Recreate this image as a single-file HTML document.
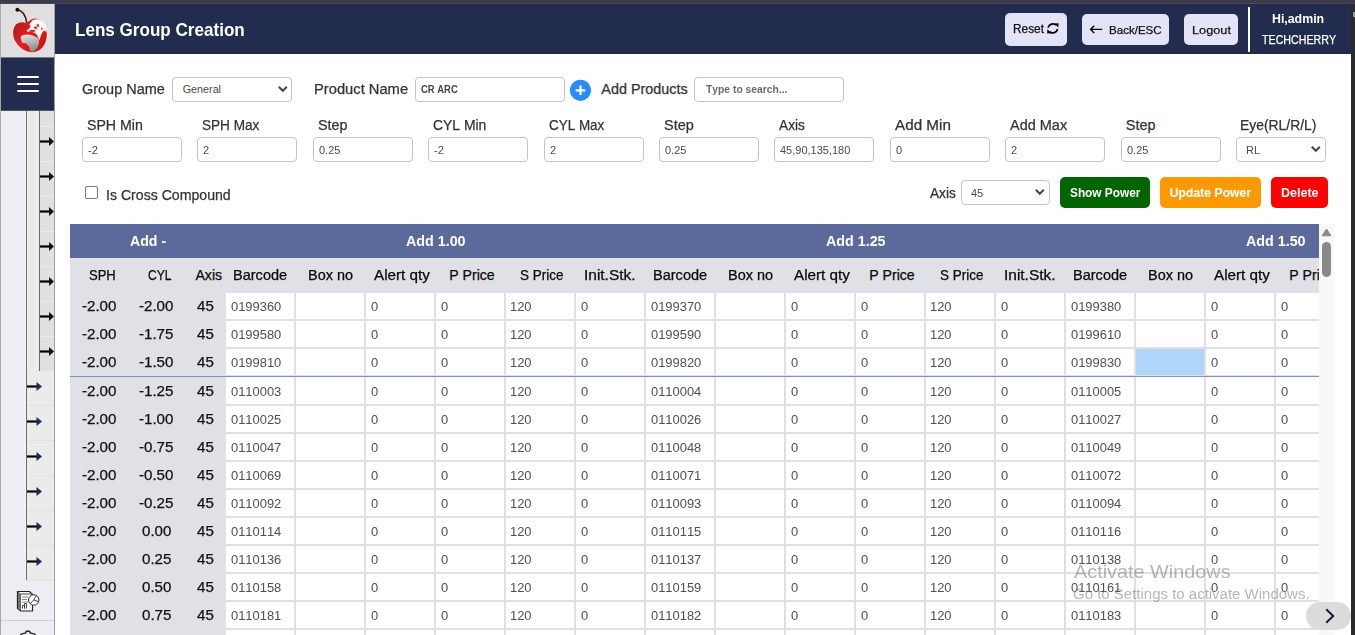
<!DOCTYPE html>
<html><head><meta charset="utf-8"><title>Lens Group Creation</title>
<style>
html,body{margin:0;padding:0;width:1355px;height:635px;overflow:hidden;background:#fff}
body{position:relative;font-family:"Liberation Sans",sans-serif}
.t{position:absolute;line-height:0;white-space:nowrap;transform-origin:0 0;font-kerning:none}
.r{-webkit-text-stroke:0.25px currentColor}
</style></head><body>
<div style="position:absolute;left:0px;top:0px;width:1355px;height:4px;background:#3d3a4f"></div>
<div style="position:absolute;left:0px;top:3px;width:1355px;height:1px;background:#4a4850"></div>
<div style="position:absolute;left:1351px;top:4px;width:4px;height:631px;background:#2b2b2b"></div>
<div style="position:absolute;left:1353px;top:12px;width:2px;height:5px;background:#9a9a9a"></div>
<div style="position:absolute;left:0px;top:4px;width:1px;height:631px;background:#a8a8a8"></div>
<div style="position:absolute;left:1px;top:4px;width:53px;height:53px;background:#dfdfdf"></div>
<div style="position:absolute;left:1px;top:57px;width:53px;height:1px;background:#7a7a7a"></div>
<div style="position:absolute;left:1px;top:58px;width:53px;height:52px;background:#212c4f"></div>
<div style="position:absolute;left:17px;top:76px;width:22px;height:2px;background:#fff;border-radius:1px"></div>
<div style="position:absolute;left:17px;top:83px;width:22px;height:2px;background:#fff;border-radius:1px"></div>
<div style="position:absolute;left:17px;top:90px;width:22px;height:2px;background:#fff;border-radius:1px"></div>
<div style="position:absolute;left:1px;top:110px;width:53px;height:1px;background:#555"></div>
<div style="position:absolute;left:1px;top:111px;width:25px;height:524px;background:#edeef3"></div>
<div style="position:absolute;left:25px;top:111px;width:1px;height:469px;background:#f7f8fc"></div>
<div style="position:absolute;left:26px;top:111px;width:1px;height:469px;background:#6b6b6b"></div>
<div style="position:absolute;left:27px;top:111px;width:12px;height:469px;background:#ebebeb"></div>
<div style="position:absolute;left:27px;top:111px;width:1px;height:469px;background:#f3f3f3"></div>
<div style="position:absolute;left:39px;top:111px;width:1px;height:260px;background:#6b6b6b"></div>
<div style="position:absolute;left:40px;top:111px;width:14px;height:260px;background:#e0e0e0"></div>
<div style="position:absolute;left:27px;top:371px;width:27px;height:209px;background:#ebebeb"></div>
<div style="position:absolute;left:26px;top:580px;width:28px;height:55px;background:#edeef3"></div>
<div style="position:absolute;left:25px;top:580px;width:1px;height:55px;background:#edeef3"></div>
<div style="position:absolute;left:54px;top:4px;width:1px;height:631px;background:#a0a0a0"></div>
<div style="position:absolute;left:40px;top:126px;width:14px;height:1px;background:#eaeaea"></div>
<div style="position:absolute;left:40px;top:161px;width:14px;height:1px;background:#eaeaea"></div>
<div style="position:absolute;left:40px;top:196px;width:14px;height:1px;background:#eaeaea"></div>
<div style="position:absolute;left:40px;top:231px;width:14px;height:1px;background:#eaeaea"></div>
<div style="position:absolute;left:40px;top:266px;width:14px;height:1px;background:#eaeaea"></div>
<div style="position:absolute;left:40px;top:301px;width:14px;height:1px;background:#eaeaea"></div>
<div style="position:absolute;left:40px;top:336px;width:14px;height:1px;background:#eaeaea"></div>
<div style="position:absolute;left:27px;top:405px;width:27px;height:1px;background:#e2e2e2"></div>
<div style="position:absolute;left:27px;top:440px;width:27px;height:1px;background:#e2e2e2"></div>
<div style="position:absolute;left:27px;top:475px;width:27px;height:1px;background:#e2e2e2"></div>
<div style="position:absolute;left:27px;top:510px;width:27px;height:1px;background:#e2e2e2"></div>
<div style="position:absolute;left:27px;top:545px;width:27px;height:1px;background:#e2e2e2"></div>
<div style="position:absolute;left:27px;top:580px;width:27px;height:1px;background:#e2e2e2"></div>
<div style="position:absolute;left:1px;top:620px;width:53px;height:1px;background:#d0d0d0"></div>
<svg style="position:absolute;left:0;top:0" width="60" height="635"><path d="M40 141.5h10" stroke="#000" stroke-width="2.2"/><path d="M49 137.0l5 4.5l-5 4.5z" fill="#111"/><path d="M40 176.5h10" stroke="#000" stroke-width="2.2"/><path d="M49 172.0l5 4.5l-5 4.5z" fill="#111"/><path d="M40 211.5h10" stroke="#000" stroke-width="2.2"/><path d="M49 207.0l5 4.5l-5 4.5z" fill="#111"/><path d="M40 246.5h10" stroke="#000" stroke-width="2.2"/><path d="M49 242.0l5 4.5l-5 4.5z" fill="#111"/><path d="M40 281.5h10" stroke="#000" stroke-width="2.2"/><path d="M49 277.0l5 4.5l-5 4.5z" fill="#111"/><path d="M40 316.5h10" stroke="#000" stroke-width="2.2"/><path d="M49 312.0l5 4.5l-5 4.5z" fill="#111"/><path d="M40 351.5h10" stroke="#000" stroke-width="2.2"/><path d="M49 347.0l5 4.5l-5 4.5z" fill="#111"/><path d="M27 386.5h10" stroke="#000" stroke-width="2.2"/><path d="M36.5 382.0l5.5 4.5l-5.5 4.5z" fill="#1c2a55"/><path d="M27 421.5h10" stroke="#000" stroke-width="2.2"/><path d="M36.5 417.0l5.5 4.5l-5.5 4.5z" fill="#1c2a55"/><path d="M27 456.5h10" stroke="#000" stroke-width="2.2"/><path d="M36.5 452.0l5.5 4.5l-5.5 4.5z" fill="#1c2a55"/><path d="M27 491.5h10" stroke="#000" stroke-width="2.2"/><path d="M36.5 487.0l5.5 4.5l-5.5 4.5z" fill="#1c2a55"/><path d="M27 526.5h10" stroke="#000" stroke-width="2.2"/><path d="M36.5 522.0l5.5 4.5l-5.5 4.5z" fill="#1c2a55"/><path d="M27 561.5h10" stroke="#000" stroke-width="2.2"/><path d="M36.5 557.0l5.5 4.5l-5.5 4.5z" fill="#1c2a55"/><g><path d="M17.5 591.5h12l3 3v16.5h-12l-3-2.5z" fill="#fff" stroke="#222" stroke-width="1.2"/><path d="M17.5 591.5l3 2.5v17M20.5 594h12" fill="none" stroke="#444" stroke-width="1"/><path d="M18 592l2.5 2v16.5l-2.5-2.5z" fill="#777"/><path d="M22 597h6M22 599.5h5M22 602h6" stroke="#888" stroke-width="1"/><path d="M22.5 608.5v-3h2v3M24.5 608.5v-5h2v5" fill="none" stroke="#333" stroke-width="0.9"/><circle cx="33.7" cy="600" r="5.2" fill="#fff" stroke="#333" stroke-width="1"/><path d="M33.7 600l2.5-4.3M33.7 600l4.6 1.5M33.7 600l-3.5 3.8" stroke="#333" stroke-width="0.9"/></g><path d="M20.5 636 Q20.5 633.5 22.8 633.6 L25.6 632.8 L26.3 631.3 H29.5 L30.2 632.8 L33 633.6 Q35.5 633.5 35.5 636" fill="none" stroke="#222" stroke-width="1.4"/></svg>
<svg style="position:absolute;left:0;top:4px" width="55" height="53" viewBox="0 4 55 53">
<defs>
<linearGradient id="rg" x1="0" y1="0.2" x2="1" y2="0.8"><stop offset="0" stop-color="#a81e1e"/><stop offset="0.45" stop-color="#ec1a1a"/><stop offset="1" stop-color="#c81414"/></linearGradient>
<linearGradient id="gg" x1="0" y1="0" x2="0.3" y2="1"><stop offset="0" stop-color="#e6e8e8"/><stop offset="1" stop-color="#8a9090"/></linearGradient>
<linearGradient id="wg" x1="0" y1="0" x2="1" y2="1"><stop offset="0" stop-color="#ffffff"/><stop offset="1" stop-color="#e6eeee"/></linearGradient>
<filter id="bl" x="-10%" y="-10%" width="120%" height="120%"><feGaussianBlur stdDeviation="0.45"/></filter>
</defs>
<g filter="url(#bl)">
<path d="M26.7 23.2 C23 21.5 17 21.8 14.5 26.5 C12.4 30.5 12.6 38 16.3 42.5 C19 47 24 50.8 30 52 C36 53 41 49.8 44 45.2 C47.2 40 47.4 33 45.6 27.8 C43.6 22 39.2 18.2 35 18.5 C31 18.8 28.5 21.5 26.7 23.2 Z" fill="url(#rg)"/>
<path d="M32.5 20.2 C36 18.4 41.5 19 44.6 23.2 C46.4 26 46.8 29.5 46.4 32 L44.2 30.6 L42.2 32.4 L40.6 36.6 L39.4 40.6 L37.6 36 L35.4 33.2 L31.6 31.8 L27.2 31.6 L26.4 30.4 L29.4 28.6 L30.6 26.4 L29.4 24.2 Z" fill="url(#wg)"/>
<path d="M33.6 27.6 l2.4 -1.6 l1.4 2.2 l-2 1.4z M36.4 24.6 l1.8 -0.8 l1.2 2.6 l-1.6 0.8z M28.8 30.6 l3.6 -0.8 l3.4 0.8 l-1.6 1.4 l-3.6 0.1z M41 27.5 l2 1 l-1.4 2z" fill="#ea2020"/>
<path d="M20.6 36.8 C22.5 34.4 27 34 31.6 35 L35.6 36.8 L38.6 38.2 L39.2 43 L37.2 48 L33.6 51.4 L30.4 51.6 L29 46.5 L26 43.6 L21.8 42.8 Z" fill="url(#gg)"/>
</g>
<path d="M17.5 9.8 C22 10.6 25.6 14.6 26.8 22.8" fill="none" stroke="#3a1a12" stroke-width="1.6"/>
<circle cx="17.4" cy="9.8" r="2" fill="#2a0808"/>
</svg>
<div style="position:absolute;left:55px;top:4px;width:1296px;height:50px;background:#212c4f"></div>
<div class="t" style="left:75.16px;top:30.00px;font-size:17.73px;color:#fff;font-weight:bold;transform:scaleX(0.9634);">Lens Group Creation</div>
<div style="position:absolute;left:1005px;top:13px;width:62px;height:33px;background:#e4e4f8;border-radius:5px"></div>
<div style="position:absolute;left:1082px;top:14px;width:87px;height:31px;background:#e4e4f8;border-radius:5px"></div>
<div style="position:absolute;left:1184px;top:14px;width:54px;height:31px;background:#e4e4f8;border-radius:5px"></div>
<div class="t r" style="left:1012.83px;top:29.00px;font-size:12.06px;color:#111;transform:scaleX(0.9824);">Reset</div>
<div class="t r" style="left:1108.75px;top:30.00px;font-size:11.77px;color:#111;transform:scaleX(0.9820);">Back/ESC</div>
<div class="t r" style="left:1191.76px;top:30.00px;font-size:11.77px;color:#111;transform:scaleX(1.0813);">Logout</div>
<svg style="position:absolute;left:1040px;top:18px" width="30" height="22" viewBox="1040 18 30 22"><path d="M1048.1 27.6 A4.9 4.9 0 0 1 1056.2 25.2" fill="none" stroke="#000" stroke-width="1.7"/><path d="M1054.2 23.6 L1058.6 23.2 L1058.4 27.6 Z" fill="#000"/><path d="M1057.6 29 A4.9 4.9 0 0 1 1049.5 31.6" fill="none" stroke="#000" stroke-width="1.7"/><path d="M1051.6 33.2 L1047.2 33.6 L1047.3 29.2 Z" fill="#000"/></svg>
<svg style="position:absolute;left:1085px;top:20px" width="25" height="20" viewBox="1085 20 25 20"><path d="M1090.5 29.4 h11.7 M1094.2 25.8 l-3.6 3.6 l3.6 3.6" fill="none" stroke="#000" stroke-width="1.4"/></svg>
<div style="position:absolute;left:1248px;top:7px;width:2px;height:45px;background:#fff"></div>
<div class="t" style="left:1272.27px;top:19.00px;font-size:12.50px;color:#fff;font-weight:bold;transform:scaleX(0.9869);">Hi,admin</div>
<div class="t r" style="left:1261.56px;top:40.00px;font-size:12.21px;color:#fff;transform:scaleX(0.8748);">TECHCHERRY</div>
<div class="t r" style="left:82.37px;top:89.00px;font-size:14.39px;color:#333;transform:scaleX(1.0060);">Group Name</div>
<div style="position:absolute;left:172px;top:77px;width:118px;height:23px;background:#fff;border:1px solid #c4c4c4;border-radius:4px"></div>
<div class="t" style="left:182.76px;top:89.00px;font-size:10.76px;color:#4a4a4a;">General</div>
<svg style="position:absolute;left:278px;top:85px" width="12" height="8" viewBox="0 0 12 8"><path d="M0.8 1.8 L4.8 5.8 L8.8 1.8" fill="none" stroke="#474747" stroke-width="2"/></svg>
<div class="t r" style="left:314.29px;top:89.00px;font-size:14.39px;color:#333;transform:scaleX(1.0238);">Product Name</div>
<div style="position:absolute;left:415px;top:77px;width:148px;height:23px;background:#fff;border:1px solid #c4c4c4;border-radius:4px"></div>
<div class="t" style="left:421.31px;top:89.00px;font-size:11.05px;color:#444;font-weight:bold;transform:scaleX(0.8554);">CR ARC</div>
<svg style="position:absolute;left:569px;top:79px" width="23" height="23" viewBox="0 0 23 23"><circle cx="11.5" cy="11.3" r="10.6" fill="#2a8bfb"/><path d="M11.5 6.5v9.6M6.7 11.3h9.6" stroke="#fff" stroke-width="2.2"/></svg>
<div class="t r" style="left:601.37px;top:89.00px;font-size:14.39px;color:#333;">Add Products</div>
<div style="position:absolute;left:694px;top:77px;width:148px;height:23px;background:#fff;border:1px solid #c4c4c4;border-radius:4px"></div>
<div class="t" style="left:706.38px;top:89.00px;font-size:10.76px;color:#6a6a6a;font-weight:bold;transform:scaleX(0.9605);">Type to search...</div>
<div class="t r" style="left:86.86px;top:125.00px;font-size:14.39px;color:#333;transform:scaleX(0.9840);">SPH Min</div>
<div style="position:absolute;left:82px;top:137px;width:98px;height:23px;background:#fff;border:1px solid #c4c4c4;border-radius:4px"></div>
<div class="t r" style="left:201.88px;top:125.00px;font-size:14.39px;color:#333;transform:scaleX(0.9439);">SPH Max</div>
<div style="position:absolute;left:197px;top:137px;width:98px;height:23px;background:#fff;border:1px solid #c4c4c4;border-radius:4px"></div>
<div class="t r" style="left:317.85px;top:125.00px;font-size:14.39px;color:#333;transform:scaleX(0.9949);">Step</div>
<div style="position:absolute;left:313px;top:137px;width:98px;height:23px;background:#fff;border:1px solid #c4c4c4;border-radius:4px"></div>
<div class="t r" style="left:432.79px;top:125.00px;font-size:14.39px;color:#333;transform:scaleX(0.9680);">CYL Min</div>
<div style="position:absolute;left:428px;top:137px;width:98px;height:23px;background:#fff;border:1px solid #c4c4c4;border-radius:4px"></div>
<div class="t r" style="left:548.82px;top:125.00px;font-size:14.39px;color:#333;transform:scaleX(0.9350);">CYL Max</div>
<div style="position:absolute;left:544px;top:137px;width:98px;height:23px;background:#fff;border:1px solid #c4c4c4;border-radius:4px"></div>
<div class="t r" style="left:663.84px;top:125.00px;font-size:14.39px;color:#333;transform:scaleX(1.0055);">Step</div>
<div style="position:absolute;left:659px;top:137px;width:98px;height:23px;background:#fff;border:1px solid #c4c4c4;border-radius:4px"></div>
<div class="t r" style="left:779.47px;top:125.00px;font-size:14.39px;color:#333;transform:scaleX(0.9536);">Axis</div>
<div style="position:absolute;left:774px;top:137px;width:98px;height:23px;background:#fff;border:1px solid #c4c4c4;border-radius:4px"></div>
<div class="t r" style="left:895.47px;top:125.00px;font-size:14.39px;color:#333;transform:scaleX(1.0593);">Add Min</div>
<div style="position:absolute;left:890px;top:137px;width:98px;height:23px;background:#fff;border:1px solid #c4c4c4;border-radius:4px"></div>
<div class="t r" style="left:1010.47px;top:125.00px;font-size:14.39px;color:#333;transform:scaleX(1.0070);">Add Max</div>
<div style="position:absolute;left:1005px;top:137px;width:98px;height:23px;background:#fff;border:1px solid #c4c4c4;border-radius:4px"></div>
<div class="t r" style="left:1125.85px;top:125.00px;font-size:14.39px;color:#333;">Step</div>
<div style="position:absolute;left:1121px;top:137px;width:98px;height:23px;background:#fff;border:1px solid #c4c4c4;border-radius:4px"></div>
<div class="t r" style="left:1240.36px;top:125.00px;font-size:14.39px;color:#333;transform:scaleX(0.9664);">Eye(RL/R/L)</div>
<div style="position:absolute;left:1236px;top:137px;width:88px;height:23px;background:#fff;border:1px solid #c4c4c4;border-radius:4px"></div>
<div class="t" style="left:780.45px;top:151.00px;font-size:10.17px;color:#4a4a4a;transform:scaleX(1.0833);">45,90,135,180</div>
<div class="t" style="left:88.31px;top:151.00px;font-size:10.17px;color:#4a4a4a;transform:scaleX(1.0833);">-2</div>
<div class="t" style="left:202.95px;top:151.00px;font-size:10.17px;color:#4a4a4a;transform:scaleX(1.0833);">2</div>
<div class="t" style="left:319.07px;top:151.00px;font-size:10.17px;color:#4a4a4a;transform:scaleX(1.0833);">0.25</div>
<div class="t" style="left:434.31px;top:151.00px;font-size:10.17px;color:#4a4a4a;transform:scaleX(1.0833);">-2</div>
<div class="t" style="left:549.95px;top:151.00px;font-size:10.17px;color:#4a4a4a;transform:scaleX(1.0833);">2</div>
<div class="t" style="left:665.07px;top:151.00px;font-size:10.17px;color:#4a4a4a;transform:scaleX(1.0833);">0.25</div>
<div class="t" style="left:896.07px;top:151.00px;font-size:10.17px;color:#4a4a4a;transform:scaleX(1.0833);">0</div>
<div class="t" style="left:1010.95px;top:151.00px;font-size:10.17px;color:#4a4a4a;transform:scaleX(1.0833);">2</div>
<div class="t" style="left:1127.07px;top:151.00px;font-size:10.17px;color:#4a4a4a;transform:scaleX(1.0833);">0.25</div>
<div class="t" style="left:1245.60px;top:151.00px;font-size:10.17px;color:#4a4a4a;transform:scaleX(1.0833);">RL</div>
<svg style="position:absolute;left:1311px;top:145px" width="12" height="8" viewBox="0 0 12 8"><path d="M0.8 1.8 L4.8 5.8 L8.8 1.8" fill="none" stroke="#474747" stroke-width="2"/></svg>
<div style="position:absolute;left:85px;top:186px;width:11px;height:11px;border:1px solid #777;border-radius:2px;background:#fff"></div>
<div class="t r" style="left:105.50px;top:195.00px;font-size:14.39px;color:#333;transform:scaleX(0.9816);">Is Cross Compound</div>
<div class="t r" style="left:930.17px;top:193.00px;font-size:14.39px;color:#333;transform:scaleX(0.9498);">Axis</div>
<div style="position:absolute;left:961px;top:180px;width:87px;height:23px;background:#fff;border:1px solid #c4c4c4;border-radius:4px"></div>
<div class="t" style="left:971.05px;top:194.00px;font-size:10.17px;color:#4a4a4a;transform:scaleX(1.0833);">45</div>
<svg style="position:absolute;left:1035px;top:188px" width="12" height="8" viewBox="0 0 12 8"><path d="M0.8 1.8 L4.8 5.8 L8.8 1.8" fill="none" stroke="#474747" stroke-width="2"/></svg>
<div style="position:absolute;left:1060px;top:177px;width:90px;height:31px;background:#006400;border-radius:5px"></div>
<div style="position:absolute;left:1160px;top:177px;width:101px;height:31px;background:#ff9900;border-radius:5px"></div>
<div style="position:absolute;left:1271px;top:177px;width:57px;height:31px;background:#ff0000;border-radius:5px"></div>
<div class="t" style="left:1069.86px;top:193.00px;font-size:12.79px;color:#fff;font-weight:bold;transform:scaleX(0.9260);">Show Power</div>
<div class="t" style="left:1169.77px;top:193.00px;font-size:12.21px;color:#fff;font-weight:bold;">Update Power</div>
<div class="t" style="left:1280.96px;top:193.00px;font-size:12.21px;color:#fff;font-weight:bold;transform:scaleX(1.0251);">Delete</div>
<div style="position:absolute;left:70px;top:224px;width:1249px;height:34px;background:#5b6a9a"></div>
<div style="position:absolute;left:70px;top:258px;width:1249px;height:35px;background:#dfe1e6"></div>
<div style="position:absolute;left:70px;top:293px;width:156px;height:342px;background:#dfe1e6"></div>
<div style="position:absolute;left:226px;top:293px;width:1093px;height:342px;background:#fff"></div>
<div style="position:absolute;left:294px;top:293px;width:2px;height:342px;background:#e0e0e0"></div>
<div style="position:absolute;left:364px;top:293px;width:2px;height:342px;background:#e0e0e0"></div>
<div style="position:absolute;left:434px;top:293px;width:2px;height:342px;background:#e0e0e0"></div>
<div style="position:absolute;left:504px;top:293px;width:2px;height:342px;background:#e0e0e0"></div>
<div style="position:absolute;left:574px;top:293px;width:2px;height:342px;background:#e0e0e0"></div>
<div style="position:absolute;left:644px;top:293px;width:2px;height:342px;background:#e0e0e0"></div>
<div style="position:absolute;left:714px;top:293px;width:2px;height:342px;background:#e0e0e0"></div>
<div style="position:absolute;left:784px;top:293px;width:2px;height:342px;background:#e0e0e0"></div>
<div style="position:absolute;left:854px;top:293px;width:2px;height:342px;background:#e0e0e0"></div>
<div style="position:absolute;left:924px;top:293px;width:2px;height:342px;background:#e0e0e0"></div>
<div style="position:absolute;left:994px;top:293px;width:2px;height:342px;background:#e0e0e0"></div>
<div style="position:absolute;left:1064px;top:293px;width:2px;height:342px;background:#e0e0e0"></div>
<div style="position:absolute;left:1134px;top:293px;width:2px;height:342px;background:#e0e0e0"></div>
<div style="position:absolute;left:1204px;top:293px;width:2px;height:342px;background:#e0e0e0"></div>
<div style="position:absolute;left:1274px;top:293px;width:2px;height:342px;background:#e0e0e0"></div>
<div style="position:absolute;left:226px;top:319px;width:1093px;height:2px;background:#e0e0e0"></div>
<div style="position:absolute;left:226px;top:347px;width:1093px;height:2px;background:#e0e0e0"></div>
<div style="position:absolute;left:226px;top:375px;width:1093px;height:2px;background:#e0e0e0"></div>
<div style="position:absolute;left:226px;top:404px;width:1093px;height:2px;background:#e0e0e0"></div>
<div style="position:absolute;left:226px;top:432px;width:1093px;height:2px;background:#e0e0e0"></div>
<div style="position:absolute;left:226px;top:460px;width:1093px;height:2px;background:#e0e0e0"></div>
<div style="position:absolute;left:226px;top:488px;width:1093px;height:2px;background:#e0e0e0"></div>
<div style="position:absolute;left:226px;top:516px;width:1093px;height:2px;background:#e0e0e0"></div>
<div style="position:absolute;left:226px;top:544px;width:1093px;height:2px;background:#e0e0e0"></div>
<div style="position:absolute;left:226px;top:572px;width:1093px;height:2px;background:#e0e0e0"></div>
<div style="position:absolute;left:226px;top:600px;width:1093px;height:2px;background:#e0e0e0"></div>
<div style="position:absolute;left:226px;top:628px;width:1093px;height:2px;background:#e0e0e0"></div>
<div style="position:absolute;left:70px;top:376px;width:1249px;height:1px;background:#7b93d3"></div>
<div style="position:absolute;left:1136px;top:349px;width:68px;height:26px;background:#b0d5fb"></div>
<div class="t" style="left:130.25px;top:241.00px;font-size:14.24px;color:#fff;font-weight:bold;transform:scaleX(0.9925);">Add -</div>
<div class="t" style="left:405.74px;top:241.00px;font-size:13.95px;color:#fff;font-weight:bold;transform:scaleX(1.0255);">Add 1.00</div>
<div class="t" style="left:826.14px;top:241.00px;font-size:13.95px;color:#fff;font-weight:bold;transform:scaleX(1.0255);">Add 1.25</div>
<div class="t" style="left:1245.74px;top:241.00px;font-size:13.95px;color:#fff;font-weight:bold;transform:scaleX(1.0255);">Add 1.50</div>
<div class="t r" style="left:89.31px;top:275.00px;font-size:14.10px;color:#0a0a0a;transform:scaleX(0.9228);">SPH</div>
<div class="t r" style="left:148.19px;top:275.00px;font-size:14.10px;color:#0a0a0a;transform:scaleX(0.8574);">CYL</div>
<div class="t r" style="left:195.47px;top:275.00px;font-size:14.10px;color:#0a0a0a;">Axis</div>
<div class="t r" style="left:232.91px;top:275.00px;font-size:14.10px;color:#0a0a0a;transform:scaleX(1.0310);">Barcode</div>
<div class="t r" style="left:307.61px;top:275.00px;font-size:14.10px;color:#0a0a0a;transform:scaleX(1.0250);">Box no</div>
<div class="t r" style="left:374.07px;top:275.00px;font-size:14.10px;color:#0a0a0a;transform:scaleX(1.0802);">Alert qty</div>
<div class="t r" style="left:449.25px;top:275.00px;font-size:14.10px;color:#0a0a0a;">P Price</div>
<div class="t r" style="left:520.19px;top:275.00px;font-size:14.10px;color:#0a0a0a;transform:scaleX(0.9553);">S Price</div>
<div class="t r" style="left:584.37px;top:275.00px;font-size:14.10px;color:#0a0a0a;transform:scaleX(1.0963);">Init.Stk.</div>
<div class="t r" style="left:652.91px;top:275.00px;font-size:14.10px;color:#0a0a0a;transform:scaleX(1.0310);">Barcode</div>
<div class="t r" style="left:727.61px;top:275.00px;font-size:14.10px;color:#0a0a0a;transform:scaleX(1.0250);">Box no</div>
<div class="t r" style="left:794.07px;top:275.00px;font-size:14.10px;color:#0a0a0a;transform:scaleX(1.0802);">Alert qty</div>
<div class="t r" style="left:869.25px;top:275.00px;font-size:14.10px;color:#0a0a0a;">P Price</div>
<div class="t r" style="left:940.19px;top:275.00px;font-size:14.10px;color:#0a0a0a;transform:scaleX(0.9553);">S Price</div>
<div class="t r" style="left:1004.37px;top:275.00px;font-size:14.10px;color:#0a0a0a;transform:scaleX(1.0963);">Init.Stk.</div>
<div class="t r" style="left:1072.91px;top:275.00px;font-size:14.10px;color:#0a0a0a;transform:scaleX(1.0310);">Barcode</div>
<div class="t r" style="left:1147.61px;top:275.00px;font-size:14.10px;color:#0a0a0a;transform:scaleX(1.0250);">Box no</div>
<div class="t r" style="left:1214.07px;top:275.00px;font-size:14.10px;color:#0a0a0a;transform:scaleX(1.0802);">Alert qty</div>
<div class="t r" style="left:1289.25px;top:275.00px;font-size:14.10px;color:#0a0a0a;">P Price</div>
<div class="t r" style="left:1360.19px;top:275.00px;font-size:14.10px;color:#0a0a0a;transform:scaleX(0.9553);">S Price</div>
<div class="t r" style="left:1424.37px;top:275.00px;font-size:14.10px;color:#0a0a0a;transform:scaleX(1.0963);">Init.Stk.</div>
<div class="t r" style="left:81.93px;top:306.00px;font-size:13.95px;color:#111;transform:scaleX(1.0836);">-2.00</div>
<div class="t r" style="left:139.03px;top:306.00px;font-size:13.95px;color:#111;transform:scaleX(1.0836);">-2.00</div>
<div class="t r" style="left:196.85px;top:306.00px;font-size:13.95px;color:#111;transform:scaleX(1.0836);">45</div>
<div class="t" style="left:230.80px;top:307.00px;font-size:12.50px;color:#505050;transform:scaleX(1.0338);">0199360</div>
<div class="t" style="left:370.80px;top:307.00px;font-size:12.50px;color:#505050;transform:scaleX(1.0338);">0</div>
<div class="t" style="left:440.80px;top:307.00px;font-size:12.50px;color:#505050;transform:scaleX(1.0338);">0</div>
<div class="t" style="left:510.32px;top:307.00px;font-size:12.50px;color:#505050;transform:scaleX(1.0338);">120</div>
<div class="t" style="left:580.80px;top:307.00px;font-size:12.50px;color:#505050;transform:scaleX(1.0338);">0</div>
<div class="t" style="left:650.80px;top:307.00px;font-size:12.50px;color:#505050;transform:scaleX(1.0338);">0199370</div>
<div class="t" style="left:790.80px;top:307.00px;font-size:12.50px;color:#505050;transform:scaleX(1.0338);">0</div>
<div class="t" style="left:860.80px;top:307.00px;font-size:12.50px;color:#505050;transform:scaleX(1.0338);">0</div>
<div class="t" style="left:930.32px;top:307.00px;font-size:12.50px;color:#505050;transform:scaleX(1.0338);">120</div>
<div class="t" style="left:1000.80px;top:307.00px;font-size:12.50px;color:#505050;transform:scaleX(1.0338);">0</div>
<div class="t" style="left:1070.80px;top:307.00px;font-size:12.50px;color:#505050;transform:scaleX(1.0338);">0199380</div>
<div class="t" style="left:1210.80px;top:307.00px;font-size:12.50px;color:#505050;transform:scaleX(1.0338);">0</div>
<div class="t" style="left:1280.80px;top:307.00px;font-size:12.50px;color:#505050;transform:scaleX(1.0338);">0</div>
<div class="t r" style="left:81.93px;top:334.00px;font-size:13.95px;color:#111;transform:scaleX(1.0836);">-2.00</div>
<div class="t r" style="left:139.05px;top:334.00px;font-size:13.95px;color:#111;transform:scaleX(1.0836);">-1.75</div>
<div class="t r" style="left:196.85px;top:334.00px;font-size:13.95px;color:#111;transform:scaleX(1.0836);">45</div>
<div class="t" style="left:230.80px;top:335.00px;font-size:12.50px;color:#505050;transform:scaleX(1.0338);">0199580</div>
<div class="t" style="left:370.80px;top:335.00px;font-size:12.50px;color:#505050;transform:scaleX(1.0338);">0</div>
<div class="t" style="left:440.80px;top:335.00px;font-size:12.50px;color:#505050;transform:scaleX(1.0338);">0</div>
<div class="t" style="left:510.32px;top:335.00px;font-size:12.50px;color:#505050;transform:scaleX(1.0338);">120</div>
<div class="t" style="left:580.80px;top:335.00px;font-size:12.50px;color:#505050;transform:scaleX(1.0338);">0</div>
<div class="t" style="left:650.80px;top:335.00px;font-size:12.50px;color:#505050;transform:scaleX(1.0338);">0199590</div>
<div class="t" style="left:790.80px;top:335.00px;font-size:12.50px;color:#505050;transform:scaleX(1.0338);">0</div>
<div class="t" style="left:860.80px;top:335.00px;font-size:12.50px;color:#505050;transform:scaleX(1.0338);">0</div>
<div class="t" style="left:930.32px;top:335.00px;font-size:12.50px;color:#505050;transform:scaleX(1.0338);">120</div>
<div class="t" style="left:1000.80px;top:335.00px;font-size:12.50px;color:#505050;transform:scaleX(1.0338);">0</div>
<div class="t" style="left:1070.80px;top:335.00px;font-size:12.50px;color:#505050;transform:scaleX(1.0338);">0199610</div>
<div class="t" style="left:1210.80px;top:335.00px;font-size:12.50px;color:#505050;transform:scaleX(1.0338);">0</div>
<div class="t" style="left:1280.80px;top:335.00px;font-size:12.50px;color:#505050;transform:scaleX(1.0338);">0</div>
<div class="t r" style="left:81.93px;top:362.00px;font-size:13.95px;color:#111;transform:scaleX(1.0836);">-2.00</div>
<div class="t r" style="left:139.03px;top:362.00px;font-size:13.95px;color:#111;transform:scaleX(1.0836);">-1.50</div>
<div class="t r" style="left:196.85px;top:362.00px;font-size:13.95px;color:#111;transform:scaleX(1.0836);">45</div>
<div class="t" style="left:230.80px;top:363.00px;font-size:12.50px;color:#505050;transform:scaleX(1.0338);">0199810</div>
<div class="t" style="left:370.80px;top:363.00px;font-size:12.50px;color:#505050;transform:scaleX(1.0338);">0</div>
<div class="t" style="left:440.80px;top:363.00px;font-size:12.50px;color:#505050;transform:scaleX(1.0338);">0</div>
<div class="t" style="left:510.32px;top:363.00px;font-size:12.50px;color:#505050;transform:scaleX(1.0338);">120</div>
<div class="t" style="left:580.80px;top:363.00px;font-size:12.50px;color:#505050;transform:scaleX(1.0338);">0</div>
<div class="t" style="left:650.80px;top:363.00px;font-size:12.50px;color:#505050;transform:scaleX(1.0338);">0199820</div>
<div class="t" style="left:790.80px;top:363.00px;font-size:12.50px;color:#505050;transform:scaleX(1.0338);">0</div>
<div class="t" style="left:860.80px;top:363.00px;font-size:12.50px;color:#505050;transform:scaleX(1.0338);">0</div>
<div class="t" style="left:930.32px;top:363.00px;font-size:12.50px;color:#505050;transform:scaleX(1.0338);">120</div>
<div class="t" style="left:1000.80px;top:363.00px;font-size:12.50px;color:#505050;transform:scaleX(1.0338);">0</div>
<div class="t" style="left:1070.80px;top:363.00px;font-size:12.50px;color:#505050;transform:scaleX(1.0338);">0199830</div>
<div class="t" style="left:1210.80px;top:363.00px;font-size:12.50px;color:#505050;transform:scaleX(1.0338);">0</div>
<div class="t" style="left:1280.80px;top:363.00px;font-size:12.50px;color:#505050;transform:scaleX(1.0338);">0</div>
<div class="t r" style="left:81.93px;top:391.00px;font-size:13.95px;color:#111;transform:scaleX(1.0836);">-2.00</div>
<div class="t r" style="left:139.05px;top:391.00px;font-size:13.95px;color:#111;transform:scaleX(1.0836);">-1.25</div>
<div class="t r" style="left:196.85px;top:391.00px;font-size:13.95px;color:#111;transform:scaleX(1.0836);">45</div>
<div class="t" style="left:230.80px;top:392.00px;font-size:12.50px;color:#505050;transform:scaleX(1.0338);">0110003</div>
<div class="t" style="left:370.80px;top:392.00px;font-size:12.50px;color:#505050;transform:scaleX(1.0338);">0</div>
<div class="t" style="left:440.80px;top:392.00px;font-size:12.50px;color:#505050;transform:scaleX(1.0338);">0</div>
<div class="t" style="left:510.32px;top:392.00px;font-size:12.50px;color:#505050;transform:scaleX(1.0338);">120</div>
<div class="t" style="left:580.80px;top:392.00px;font-size:12.50px;color:#505050;transform:scaleX(1.0338);">0</div>
<div class="t" style="left:650.80px;top:392.00px;font-size:12.50px;color:#505050;transform:scaleX(1.0338);">0110004</div>
<div class="t" style="left:790.80px;top:392.00px;font-size:12.50px;color:#505050;transform:scaleX(1.0338);">0</div>
<div class="t" style="left:860.80px;top:392.00px;font-size:12.50px;color:#505050;transform:scaleX(1.0338);">0</div>
<div class="t" style="left:930.32px;top:392.00px;font-size:12.50px;color:#505050;transform:scaleX(1.0338);">120</div>
<div class="t" style="left:1000.80px;top:392.00px;font-size:12.50px;color:#505050;transform:scaleX(1.0338);">0</div>
<div class="t" style="left:1070.80px;top:392.00px;font-size:12.50px;color:#505050;transform:scaleX(1.0338);">0110005</div>
<div class="t" style="left:1210.80px;top:392.00px;font-size:12.50px;color:#505050;transform:scaleX(1.0338);">0</div>
<div class="t" style="left:1280.80px;top:392.00px;font-size:12.50px;color:#505050;transform:scaleX(1.0338);">0</div>
<div class="t r" style="left:81.93px;top:419.00px;font-size:13.95px;color:#111;transform:scaleX(1.0836);">-2.00</div>
<div class="t r" style="left:139.03px;top:419.00px;font-size:13.95px;color:#111;transform:scaleX(1.0836);">-1.00</div>
<div class="t r" style="left:196.85px;top:419.00px;font-size:13.95px;color:#111;transform:scaleX(1.0836);">45</div>
<div class="t" style="left:230.80px;top:420.00px;font-size:12.50px;color:#505050;transform:scaleX(1.0338);">0110025</div>
<div class="t" style="left:370.80px;top:420.00px;font-size:12.50px;color:#505050;transform:scaleX(1.0338);">0</div>
<div class="t" style="left:440.80px;top:420.00px;font-size:12.50px;color:#505050;transform:scaleX(1.0338);">0</div>
<div class="t" style="left:510.32px;top:420.00px;font-size:12.50px;color:#505050;transform:scaleX(1.0338);">120</div>
<div class="t" style="left:580.80px;top:420.00px;font-size:12.50px;color:#505050;transform:scaleX(1.0338);">0</div>
<div class="t" style="left:650.80px;top:420.00px;font-size:12.50px;color:#505050;transform:scaleX(1.0338);">0110026</div>
<div class="t" style="left:790.80px;top:420.00px;font-size:12.50px;color:#505050;transform:scaleX(1.0338);">0</div>
<div class="t" style="left:860.80px;top:420.00px;font-size:12.50px;color:#505050;transform:scaleX(1.0338);">0</div>
<div class="t" style="left:930.32px;top:420.00px;font-size:12.50px;color:#505050;transform:scaleX(1.0338);">120</div>
<div class="t" style="left:1000.80px;top:420.00px;font-size:12.50px;color:#505050;transform:scaleX(1.0338);">0</div>
<div class="t" style="left:1070.80px;top:420.00px;font-size:12.50px;color:#505050;transform:scaleX(1.0338);">0110027</div>
<div class="t" style="left:1210.80px;top:420.00px;font-size:12.50px;color:#505050;transform:scaleX(1.0338);">0</div>
<div class="t" style="left:1280.80px;top:420.00px;font-size:12.50px;color:#505050;transform:scaleX(1.0338);">0</div>
<div class="t r" style="left:81.93px;top:447.00px;font-size:13.95px;color:#111;transform:scaleX(1.0836);">-2.00</div>
<div class="t r" style="left:139.05px;top:447.00px;font-size:13.95px;color:#111;transform:scaleX(1.0836);">-0.75</div>
<div class="t r" style="left:196.85px;top:447.00px;font-size:13.95px;color:#111;transform:scaleX(1.0836);">45</div>
<div class="t" style="left:230.80px;top:448.00px;font-size:12.50px;color:#505050;transform:scaleX(1.0338);">0110047</div>
<div class="t" style="left:370.80px;top:448.00px;font-size:12.50px;color:#505050;transform:scaleX(1.0338);">0</div>
<div class="t" style="left:440.80px;top:448.00px;font-size:12.50px;color:#505050;transform:scaleX(1.0338);">0</div>
<div class="t" style="left:510.32px;top:448.00px;font-size:12.50px;color:#505050;transform:scaleX(1.0338);">120</div>
<div class="t" style="left:580.80px;top:448.00px;font-size:12.50px;color:#505050;transform:scaleX(1.0338);">0</div>
<div class="t" style="left:650.80px;top:448.00px;font-size:12.50px;color:#505050;transform:scaleX(1.0338);">0110048</div>
<div class="t" style="left:790.80px;top:448.00px;font-size:12.50px;color:#505050;transform:scaleX(1.0338);">0</div>
<div class="t" style="left:860.80px;top:448.00px;font-size:12.50px;color:#505050;transform:scaleX(1.0338);">0</div>
<div class="t" style="left:930.32px;top:448.00px;font-size:12.50px;color:#505050;transform:scaleX(1.0338);">120</div>
<div class="t" style="left:1000.80px;top:448.00px;font-size:12.50px;color:#505050;transform:scaleX(1.0338);">0</div>
<div class="t" style="left:1070.80px;top:448.00px;font-size:12.50px;color:#505050;transform:scaleX(1.0338);">0110049</div>
<div class="t" style="left:1210.80px;top:448.00px;font-size:12.50px;color:#505050;transform:scaleX(1.0338);">0</div>
<div class="t" style="left:1280.80px;top:448.00px;font-size:12.50px;color:#505050;transform:scaleX(1.0338);">0</div>
<div class="t r" style="left:81.93px;top:475.00px;font-size:13.95px;color:#111;transform:scaleX(1.0836);">-2.00</div>
<div class="t r" style="left:139.03px;top:475.00px;font-size:13.95px;color:#111;transform:scaleX(1.0836);">-0.50</div>
<div class="t r" style="left:196.85px;top:475.00px;font-size:13.95px;color:#111;transform:scaleX(1.0836);">45</div>
<div class="t" style="left:230.80px;top:476.00px;font-size:12.50px;color:#505050;transform:scaleX(1.0338);">0110069</div>
<div class="t" style="left:370.80px;top:476.00px;font-size:12.50px;color:#505050;transform:scaleX(1.0338);">0</div>
<div class="t" style="left:440.80px;top:476.00px;font-size:12.50px;color:#505050;transform:scaleX(1.0338);">0</div>
<div class="t" style="left:510.32px;top:476.00px;font-size:12.50px;color:#505050;transform:scaleX(1.0338);">120</div>
<div class="t" style="left:580.80px;top:476.00px;font-size:12.50px;color:#505050;transform:scaleX(1.0338);">0</div>
<div class="t" style="left:650.80px;top:476.00px;font-size:12.50px;color:#505050;transform:scaleX(1.0338);">0110071</div>
<div class="t" style="left:790.80px;top:476.00px;font-size:12.50px;color:#505050;transform:scaleX(1.0338);">0</div>
<div class="t" style="left:860.80px;top:476.00px;font-size:12.50px;color:#505050;transform:scaleX(1.0338);">0</div>
<div class="t" style="left:930.32px;top:476.00px;font-size:12.50px;color:#505050;transform:scaleX(1.0338);">120</div>
<div class="t" style="left:1000.80px;top:476.00px;font-size:12.50px;color:#505050;transform:scaleX(1.0338);">0</div>
<div class="t" style="left:1070.80px;top:476.00px;font-size:12.50px;color:#505050;transform:scaleX(1.0338);">0110072</div>
<div class="t" style="left:1210.80px;top:476.00px;font-size:12.50px;color:#505050;transform:scaleX(1.0338);">0</div>
<div class="t" style="left:1280.80px;top:476.00px;font-size:12.50px;color:#505050;transform:scaleX(1.0338);">0</div>
<div class="t r" style="left:81.93px;top:503.00px;font-size:13.95px;color:#111;transform:scaleX(1.0836);">-2.00</div>
<div class="t r" style="left:139.05px;top:503.00px;font-size:13.95px;color:#111;transform:scaleX(1.0836);">-0.25</div>
<div class="t r" style="left:196.85px;top:503.00px;font-size:13.95px;color:#111;transform:scaleX(1.0836);">45</div>
<div class="t" style="left:230.80px;top:504.00px;font-size:12.50px;color:#505050;transform:scaleX(1.0338);">0110092</div>
<div class="t" style="left:370.80px;top:504.00px;font-size:12.50px;color:#505050;transform:scaleX(1.0338);">0</div>
<div class="t" style="left:440.80px;top:504.00px;font-size:12.50px;color:#505050;transform:scaleX(1.0338);">0</div>
<div class="t" style="left:510.32px;top:504.00px;font-size:12.50px;color:#505050;transform:scaleX(1.0338);">120</div>
<div class="t" style="left:580.80px;top:504.00px;font-size:12.50px;color:#505050;transform:scaleX(1.0338);">0</div>
<div class="t" style="left:650.80px;top:504.00px;font-size:12.50px;color:#505050;transform:scaleX(1.0338);">0110093</div>
<div class="t" style="left:790.80px;top:504.00px;font-size:12.50px;color:#505050;transform:scaleX(1.0338);">0</div>
<div class="t" style="left:860.80px;top:504.00px;font-size:12.50px;color:#505050;transform:scaleX(1.0338);">0</div>
<div class="t" style="left:930.32px;top:504.00px;font-size:12.50px;color:#505050;transform:scaleX(1.0338);">120</div>
<div class="t" style="left:1000.80px;top:504.00px;font-size:12.50px;color:#505050;transform:scaleX(1.0338);">0</div>
<div class="t" style="left:1070.80px;top:504.00px;font-size:12.50px;color:#505050;transform:scaleX(1.0338);">0110094</div>
<div class="t" style="left:1210.80px;top:504.00px;font-size:12.50px;color:#505050;transform:scaleX(1.0338);">0</div>
<div class="t" style="left:1280.80px;top:504.00px;font-size:12.50px;color:#505050;transform:scaleX(1.0338);">0</div>
<div class="t r" style="left:81.93px;top:531.00px;font-size:13.95px;color:#111;transform:scaleX(1.0836);">-2.00</div>
<div class="t r" style="left:141.59px;top:531.00px;font-size:13.95px;color:#111;transform:scaleX(1.0836);">0.00</div>
<div class="t r" style="left:196.85px;top:531.00px;font-size:13.95px;color:#111;transform:scaleX(1.0836);">45</div>
<div class="t" style="left:230.80px;top:532.00px;font-size:12.50px;color:#505050;transform:scaleX(1.0338);">0110114</div>
<div class="t" style="left:370.80px;top:532.00px;font-size:12.50px;color:#505050;transform:scaleX(1.0338);">0</div>
<div class="t" style="left:440.80px;top:532.00px;font-size:12.50px;color:#505050;transform:scaleX(1.0338);">0</div>
<div class="t" style="left:510.32px;top:532.00px;font-size:12.50px;color:#505050;transform:scaleX(1.0338);">120</div>
<div class="t" style="left:580.80px;top:532.00px;font-size:12.50px;color:#505050;transform:scaleX(1.0338);">0</div>
<div class="t" style="left:650.80px;top:532.00px;font-size:12.50px;color:#505050;transform:scaleX(1.0338);">0110115</div>
<div class="t" style="left:790.80px;top:532.00px;font-size:12.50px;color:#505050;transform:scaleX(1.0338);">0</div>
<div class="t" style="left:860.80px;top:532.00px;font-size:12.50px;color:#505050;transform:scaleX(1.0338);">0</div>
<div class="t" style="left:930.32px;top:532.00px;font-size:12.50px;color:#505050;transform:scaleX(1.0338);">120</div>
<div class="t" style="left:1000.80px;top:532.00px;font-size:12.50px;color:#505050;transform:scaleX(1.0338);">0</div>
<div class="t" style="left:1070.80px;top:532.00px;font-size:12.50px;color:#505050;transform:scaleX(1.0338);">0110116</div>
<div class="t" style="left:1210.80px;top:532.00px;font-size:12.50px;color:#505050;transform:scaleX(1.0338);">0</div>
<div class="t" style="left:1280.80px;top:532.00px;font-size:12.50px;color:#505050;transform:scaleX(1.0338);">0</div>
<div class="t r" style="left:81.93px;top:559.00px;font-size:13.95px;color:#111;transform:scaleX(1.0836);">-2.00</div>
<div class="t r" style="left:141.61px;top:559.00px;font-size:13.95px;color:#111;transform:scaleX(1.0836);">0.25</div>
<div class="t r" style="left:196.85px;top:559.00px;font-size:13.95px;color:#111;transform:scaleX(1.0836);">45</div>
<div class="t" style="left:230.80px;top:560.00px;font-size:12.50px;color:#505050;transform:scaleX(1.0338);">0110136</div>
<div class="t" style="left:370.80px;top:560.00px;font-size:12.50px;color:#505050;transform:scaleX(1.0338);">0</div>
<div class="t" style="left:440.80px;top:560.00px;font-size:12.50px;color:#505050;transform:scaleX(1.0338);">0</div>
<div class="t" style="left:510.32px;top:560.00px;font-size:12.50px;color:#505050;transform:scaleX(1.0338);">120</div>
<div class="t" style="left:580.80px;top:560.00px;font-size:12.50px;color:#505050;transform:scaleX(1.0338);">0</div>
<div class="t" style="left:650.80px;top:560.00px;font-size:12.50px;color:#505050;transform:scaleX(1.0338);">0110137</div>
<div class="t" style="left:790.80px;top:560.00px;font-size:12.50px;color:#505050;transform:scaleX(1.0338);">0</div>
<div class="t" style="left:860.80px;top:560.00px;font-size:12.50px;color:#505050;transform:scaleX(1.0338);">0</div>
<div class="t" style="left:930.32px;top:560.00px;font-size:12.50px;color:#505050;transform:scaleX(1.0338);">120</div>
<div class="t" style="left:1000.80px;top:560.00px;font-size:12.50px;color:#505050;transform:scaleX(1.0338);">0</div>
<div class="t" style="left:1070.80px;top:560.00px;font-size:12.50px;color:#505050;transform:scaleX(1.0338);">0110138</div>
<div class="t" style="left:1210.80px;top:560.00px;font-size:12.50px;color:#505050;transform:scaleX(1.0338);">0</div>
<div class="t" style="left:1280.80px;top:560.00px;font-size:12.50px;color:#505050;transform:scaleX(1.0338);">0</div>
<div class="t r" style="left:81.93px;top:587.00px;font-size:13.95px;color:#111;transform:scaleX(1.0836);">-2.00</div>
<div class="t r" style="left:141.59px;top:587.00px;font-size:13.95px;color:#111;transform:scaleX(1.0836);">0.50</div>
<div class="t r" style="left:196.85px;top:587.00px;font-size:13.95px;color:#111;transform:scaleX(1.0836);">45</div>
<div class="t" style="left:230.80px;top:588.00px;font-size:12.50px;color:#505050;transform:scaleX(1.0338);">0110158</div>
<div class="t" style="left:370.80px;top:588.00px;font-size:12.50px;color:#505050;transform:scaleX(1.0338);">0</div>
<div class="t" style="left:440.80px;top:588.00px;font-size:12.50px;color:#505050;transform:scaleX(1.0338);">0</div>
<div class="t" style="left:510.32px;top:588.00px;font-size:12.50px;color:#505050;transform:scaleX(1.0338);">120</div>
<div class="t" style="left:580.80px;top:588.00px;font-size:12.50px;color:#505050;transform:scaleX(1.0338);">0</div>
<div class="t" style="left:650.80px;top:588.00px;font-size:12.50px;color:#505050;transform:scaleX(1.0338);">0110159</div>
<div class="t" style="left:790.80px;top:588.00px;font-size:12.50px;color:#505050;transform:scaleX(1.0338);">0</div>
<div class="t" style="left:860.80px;top:588.00px;font-size:12.50px;color:#505050;transform:scaleX(1.0338);">0</div>
<div class="t" style="left:930.32px;top:588.00px;font-size:12.50px;color:#505050;transform:scaleX(1.0338);">120</div>
<div class="t" style="left:1000.80px;top:588.00px;font-size:12.50px;color:#505050;transform:scaleX(1.0338);">0</div>
<div class="t" style="left:1070.80px;top:588.00px;font-size:12.50px;color:#505050;transform:scaleX(1.0338);">0110161</div>
<div class="t" style="left:1210.80px;top:588.00px;font-size:12.50px;color:#505050;transform:scaleX(1.0338);">0</div>
<div class="t" style="left:1280.80px;top:588.00px;font-size:12.50px;color:#505050;transform:scaleX(1.0338);">0</div>
<div class="t r" style="left:81.93px;top:615.00px;font-size:13.95px;color:#111;transform:scaleX(1.0836);">-2.00</div>
<div class="t r" style="left:141.61px;top:615.00px;font-size:13.95px;color:#111;transform:scaleX(1.0836);">0.75</div>
<div class="t r" style="left:196.85px;top:615.00px;font-size:13.95px;color:#111;transform:scaleX(1.0836);">45</div>
<div class="t" style="left:230.80px;top:616.00px;font-size:12.50px;color:#505050;transform:scaleX(1.0338);">0110181</div>
<div class="t" style="left:370.80px;top:616.00px;font-size:12.50px;color:#505050;transform:scaleX(1.0338);">0</div>
<div class="t" style="left:440.80px;top:616.00px;font-size:12.50px;color:#505050;transform:scaleX(1.0338);">0</div>
<div class="t" style="left:510.32px;top:616.00px;font-size:12.50px;color:#505050;transform:scaleX(1.0338);">120</div>
<div class="t" style="left:580.80px;top:616.00px;font-size:12.50px;color:#505050;transform:scaleX(1.0338);">0</div>
<div class="t" style="left:650.80px;top:616.00px;font-size:12.50px;color:#505050;transform:scaleX(1.0338);">0110182</div>
<div class="t" style="left:790.80px;top:616.00px;font-size:12.50px;color:#505050;transform:scaleX(1.0338);">0</div>
<div class="t" style="left:860.80px;top:616.00px;font-size:12.50px;color:#505050;transform:scaleX(1.0338);">0</div>
<div class="t" style="left:930.32px;top:616.00px;font-size:12.50px;color:#505050;transform:scaleX(1.0338);">120</div>
<div class="t" style="left:1000.80px;top:616.00px;font-size:12.50px;color:#505050;transform:scaleX(1.0338);">0</div>
<div class="t" style="left:1070.80px;top:616.00px;font-size:12.50px;color:#505050;transform:scaleX(1.0338);">0110183</div>
<div class="t" style="left:1210.80px;top:616.00px;font-size:12.50px;color:#505050;transform:scaleX(1.0338);">0</div>
<div class="t" style="left:1280.80px;top:616.00px;font-size:12.50px;color:#505050;transform:scaleX(1.0338);">0</div>
<div style="position:absolute;left:1319px;top:224px;width:15px;height:411px;background:#f8f8f8"></div>
<div style="position:absolute;left:1334px;top:224px;width:17px;height:411px;background:#fff"></div>
<svg style="position:absolute;left:1319px;top:224px" width="15" height="60" viewBox="0 0 15 60"><path d="M7.5 5 L12 11.8 H3 Z" fill="#8a8a8a" stroke="#8a8a8a" stroke-width="1" stroke-linejoin="round"/><rect x="3" y="18" width="9" height="35" rx="4.5" fill="#898989"/></svg>
<div class="t" style="left:1073.96px;top:572.00px;font-size:18.02px;color:rgba(120,120,120,0.55);transform:scaleX(1.1014);">Activate Windows</div>
<div class="t" style="left:1073.25px;top:594.00px;font-size:14.39px;color:rgba(120,120,120,0.55);transform:scaleX(1.0426);">Go to Settings to activate Windows.</div>
<div style="position:absolute;left:1306px;top:602px;width:45px;height:28px;background:#dcdcdc;border-radius:14px"></div>
<svg style="position:absolute;left:1322px;top:606px" width="16" height="20" viewBox="0 0 16 20"><path d="M4.2 3.2 L11.2 10 L4.2 16.8" fill="none" stroke="#0d1630" stroke-width="1.9"/></svg>
</body></html>
